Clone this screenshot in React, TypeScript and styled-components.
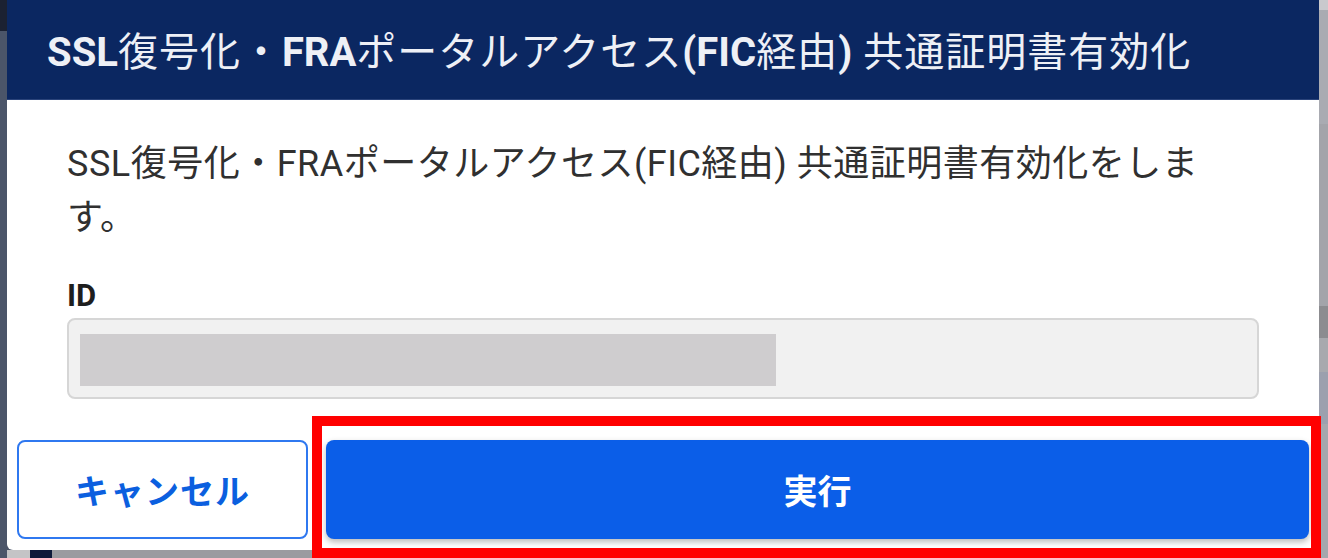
import React from 'react';
import styled, { createGlobalStyle } from 'styled-components';

const GlobalStyle = createGlobalStyle`
  html, body {
    margin: 0;
    padding: 0;
  }
  body {
    width: 1328px;
    height: 558px;
    overflow: hidden;
    background: #4b5468;
    font-family: Roboto, "Noto Sans CJK JP", sans-serif;
  }
`;

const Screen = styled.div`
  position: relative;
  display: flex;
  width: 1328px;
  height: 558px;
`;

const LeftEdge = styled.div`
  width: 7px;
  background: linear-gradient(to bottom, #1b2132 0 31px, #4b5569 31px);
`;

const RightEdge = styled.div`
  flex: 1;
  background: linear-gradient(
    to bottom,
    #c9c9cd 0 10px,
    #a9abb2 10px 124px,
    #a3a4aa 124px 306px,
    #8c8c90 306px 338px,
    #a8a9ae 338px 372px,
    #9ca0ae 372px 424px,
    #a6a7ad 424px
  );
`;

const Column = styled.div`
  width: 1312px;
  display: flex;
  flex-direction: column;
`;

const Dialog = styled.div`
  height: 550px;
  background: #ffffff;
  border-radius: 0 0 6px 6px;
  display: flex;
  flex-direction: column;
  overflow: hidden;
`;

const BottomEdge = styled.div`
  flex: 1;
  background: linear-gradient(
    to right,
    #c4c4c6 0 23px,
    #0e1a3a 23px 45px,
    #9a9ba0 45px
  );
`;

const Header = styled.div`
  height: 99px;
  border-bottom: 1px solid #2a437a;
  background: #0b2761;
  padding-left: 40px;
  display: flex;
  align-items: center;
`;

const Title = styled.h2`
  margin: 0 0 2px;
  font-size: 40px;
  font-weight: 400;
  letter-spacing: 1px;
  color: #eef0f6;
  white-space: nowrap;
`;

const Latin = styled.span`
  font-weight: 700;
  letter-spacing: 0;
`;

const Body = styled.div`
  padding: 37px 60px 0;
`;

const Message = styled.p`
  margin: 0;
  font-size: 36px;
  line-height: 54px;
  letter-spacing: 0.5px;
  color: #303030;
`;

const Label = styled.div`
  margin-top: 33px;
  font-size: 31px;
  line-height: 36px;
  font-weight: 700;
  color: #1e1e1e;
`;

const Field = styled.div`
  margin-top: 4px;
  height: 81px;
  box-sizing: border-box;
  border: 2px solid #d6d6d6;
  border-radius: 8px;
  background: #f1f1f1;
  padding: 14px 11px;
`;

const Redacted = styled.div`
  width: 696px;
  height: 52px;
  background: #cfcdcf;
`;

const Actions = styled.div`
  margin-top: 41px;
  padding: 0 10px;
  display: flex;
  gap: 18px;
`;

const Button = styled.button<{ $primary?: boolean }>`
  height: 99px;
  box-sizing: border-box;
  width: ${(p) => (p.$primary ? '983px' : '291px')};
  border-radius: 8px;
  border: ${(p) => (p.$primary ? 'none' : '2px solid #2f78f0')};
  background: ${(p) => (p.$primary ? '#0b5ee8' : '#ffffff')};
  color: ${(p) => (p.$primary ? '#ffffff' : '#0b5fdf')};
  box-shadow: ${(p) => (p.$primary ? '0 3px 6px rgba(0, 0, 0, 0.28)' : 'none')};
  font-family: Roboto, "Noto Sans CJK JP", sans-serif;
  font-size: 34px;
  font-weight: 700;
  letter-spacing: ${(p) => (p.$primary ? '0' : '1px')};
  cursor: pointer;
`;

const Highlight = styled.div`
  position: absolute;
  left: 312px;
  top: 416px;
  width: 1009px;
  height: 142px;
  box-sizing: border-box;
  border: 10px solid #ff0000;
  pointer-events: none;
`;

const App = () => {
  return (
    <>
      <GlobalStyle />
      <Screen>
        <LeftEdge />
        <Column>
          <Dialog>
            <Header>
              <Title>
                <Latin>SSL</Latin>復号化・<Latin>FRA</Latin>ポータルアクセス<Latin>(FIC</Latin>経由<Latin>)</Latin> 共通証明書有効化
              </Title>
            </Header>
            <Body>
              <Message>SSL復号化・FRAポータルアクセス(FIC経由) 共通証明書有効化をします。</Message>
              <Label>ID</Label>
              <Field>
                <Redacted />
              </Field>
            </Body>
            <Actions>
              <Button>キャンセル</Button>
              <Button $primary>実行</Button>
            </Actions>
          </Dialog>
          <BottomEdge />
        </Column>
        <RightEdge />
        <Highlight />
      </Screen>
    </>
  );
};

export default App;
